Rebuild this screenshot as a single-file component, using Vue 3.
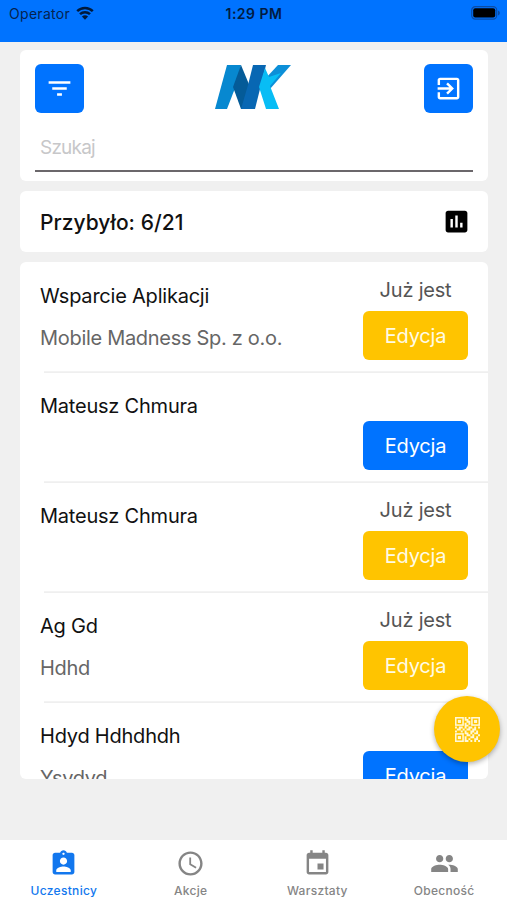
<script setup>
const people = [
  { name: 'Wsparcie Aplikacji', company: 'Mobile Madness Sp. z o.o.', present: true },
  { name: 'Mateusz Chmura', company: '', present: false },
  { name: 'Mateusz Chmura', company: '', present: true },
  { name: 'Ag Gd', company: 'Hdhd', present: true },
  { name: 'Hdyd Hdhdhdh', company: 'Ysydyd', present: false },
]

const tabs = [
  { label: 'Uczestnicy', active: true, path: 'M19 3h-4.18C14.4 1.84 13.3 1 12 1s-2.4.84-2.82 2H5c-1.1 0-2 .9-2 2v14c0 1.1.9 2 2 2h14c1.1 0 2-.9 2-2V5c0-1.1-.9-2-2-2zm-7 0c.55 0 1 .45 1 1s-.45 1-1 1-1-.45-1-1 .45-1 1-1zm0 4c1.66 0 3 1.34 3 3s-1.34 3-3 3-3-1.34-3-3 1.34-3 3-3zm6 12H6v-1.4c0-2 4-3.1 6-3.1s6 1.1 6 3.1V19z' },
  { label: 'Akcje', path: 'M11.99 2C6.47 2 2 6.48 2 12s4.47 10 9.99 10C17.52 22 22 17.52 22 12S17.52 2 11.99 2zM12 20c-4.42 0-8-3.58-8-8s3.58-8 8-8 8 3.58 8 8-3.58 8-8 8zm.5-13H11v6l5.25 3.15.75-1.23-4.5-2.67z' },
  { label: 'Warsztaty', path: 'M17 12h-5v5h5v-5zM16 1v2H8V1H6v2H5c-1.11 0-1.99.9-1.99 2L3 19c0 1.1.89 2 2 2h14c1.1 0 2-.9 2-2V5c0-1.1-.9-2-2-2h-1V1h-2zm3 18H5V8h14v11z' },
  { label: 'Obecność', path: 'M16 11c1.66 0 2.99-1.34 2.99-3S17.66 5 16 5s-3 1.34-3 3 1.34 3 3 3zm-8 0c1.66 0 2.99-1.34 2.99-3S9.66 5 8 5 5 6.34 5 8s1.34 3 3 3zm0 2c-2.33 0-7 1.17-7 3.5V19h14v-2.5c0-2.33-4.67-3.5-7-3.5zm8 0c-.29 0-.62.02-.97.05 1.16.84 1.97 1.97 1.97 3.45V19h6v-2.5c0-2.33-4.67-3.5-7-3.5z' },
]

// Data modules between the three finder squares, on a 13 x 13 grid
const qrRows = [
  '.....1.1.....',
  '.....11......',
  '......11.....',
  '.....1.1.....',
  '.....11......',
  '1.11.1.11.1.1',
  '.11.1.11.11..',
  '1..1.1..11.1.',
  '.....11.1.11.',
  '......11.1..1',
  '.....1..11.1.',
  '.....1.1..11.',
  '.....11.1.1.1',
]
const qrPath = qrRows
  .flatMap((row, y) => [...row].map((v, x) => (v === '1' ? `M${x} ${y}h1v1h-1z` : '')))
  .join('')
const finders = [[0, 0], [8.4, 0], [0, 8.4]]
</script>

<template>
  <div class="screen">
    <header class="status">
      <div class="carrier">
        <span>Operator</span>
        <svg class="wifi" viewBox="0 0 18 14">
          <path d="M1.2 5.2a11.2 11.2 0 0 1 15.6 0M4 8.2a7.2 7.2 0 0 1 10 0" />
          <path class="solid" d="M9 13.8L5.9 10.6a4.5 4.5 0 0 1 6.2 0z" />
        </svg>
      </div>
      <strong class="clock">1:29 PM</strong>
      <div class="power">
        <svg class="battery" viewBox="0 0 30 14">
          <rect class="shell" x=".7" y=".7" width="25" height="12.4" rx="3.6" />
          <rect x="2.2" y="2.2" width="22" height="9.4" rx="2" />
          <path class="tip" d="M27 4.5c2.5.7 2.5 4.3 0 5z" />
        </svg>
      </div>
    </header>

    <main class="content">
      <section class="card search">
        <div class="tools">
          <button class="square" aria-label="Filtr">
            <svg class="icon" viewBox="0 0 24 24"><path d="M10 18h4v-2h-4v2zM3 6v2h18V6H3zm3 7h12v-2H6v2z" /></svg>
          </button>
          <svg class="logo" viewBox="0 0 76 44">
            <path fill="#0788d0" d="M12 0H26L22 18L12 44H0z" />
            <path fill="#045b98" d="M26 0L38 29L34 44H26L18 22z" />
            <path fill="#0867b3" d="M38 0H51L40 44H26L33 20z" />
            <path fill="#0c8fd8" d="M63 0H76L55 24L50 14z" />
            <path fill="#08bdf5" d="M50 3L54 12L66 8L55 21L64 44H51L44 22z" />
          </svg>
          <button class="square" aria-label="Wyjdź">
            <svg class="icon" viewBox="0 0 24 24"><path d="M10.09 15.59L11.5 17l5-5-5-5-1.41 1.41L12.67 11H3v2h9.67l-2.58 2.59zM19 3H5c-1.11 0-2 .9-2 2v4h2V5h14v14H5v-4H3v4c0 1.1.89 2 2 2h14c1.1 0 2-.9 2-2V5c0-1.1-.9-2-2-2z" /></svg>
          </button>
        </div>
        <div class="field">Szukaj</div>
      </section>

      <section class="card summary">
        <span class="count">Przybyło: 6/21</span>
        <svg class="icon" viewBox="0 0 24 24"><path d="M19 3H5c-1.1 0-2 .9-2 2v14c0 1.1.9 2 2 2h14c1.1 0 2-.9 2-2V5c0-1.1-.9-2-2-2zM9 17H7v-7h2v7zm4 0h-2V7h2v10zm4 0h-2v-4h2v4z" /></svg>
      </section>

      <section class="card list">
        <article v-for="(p, i) in people" :key="i" class="row">
          <div class="who">
            <div class="name">{{ p.name }}</div>
            <div class="company">{{ p.company }}</div>
          </div>
          <div class="side">
            <div class="state">{{ p.present ? 'Już jest' : '' }}</div>
            <button class="edit" :class="{ present: p.present }">Edycja</button>
          </div>
        </article>
      </section>
    </main>

    <nav class="tabs">
      <div v-for="t in tabs" :key="t.label" class="tab" :class="{ active: t.active }">
        <svg class="icon" viewBox="0 0 24 24"><path :d="t.path" /></svg>
        <span>{{ t.label }}</span>
      </div>
    </nav>

    <button class="fab" aria-label="Kod QR">
      <svg class="qr" viewBox="0 0 13 13">
        <path :d="qrPath" />
        <g v-for="([x, y], i) in finders" :key="i">
          <rect class="ring" :x="x + 0.4" :y="y + 0.4" width="3.8" height="3.8" />
          <rect :x="x + 1.5" :y="y + 1.5" width="1.6" height="1.6" />
        </g>
      </svg>
    </button>
  </div>
</template>

<style>
body { margin: 0; background: #f0f0f0; }
</style>

<style scoped>
.screen {
  position: relative;
  display: flex;
  flex-direction: column;
  width: 507px;
  height: 900px;
  overflow: hidden;
  box-sizing: border-box;
  background: #f0f0f0;
  color: #111;
  font-family: Inter, "Liberation Sans", sans-serif;
}
button { border: 0; padding: 0; font: inherit; }
svg { display: block; fill: currentColor; }
.icon { width: 29px; height: 29px; }

.status {
  display: grid;
  grid-template-columns: 1fr auto 1fr;
  height: 42px;
  flex: none;
  box-sizing: border-box;
  padding: 4px 8px 0 9px;
  background: #0073ff;
  color: #05234f;
  font-size: 14px;
  line-height: 20px;
}
.carrier { display: flex; gap: 6px; letter-spacing: 0.3px; }
.wifi { width: 18px; height: 14px; margin-top: 2px; color: #001a3c; }
.wifi path { fill: none; stroke: currentColor; stroke-width: 2.5; }
.wifi .solid { fill: currentColor; stroke: none; }
.clock { font-weight: 600; letter-spacing: 0.5px; color: #021b42; }
.power { display: flex; justify-content: flex-end; padding-top: 2px; }
.battery { width: 30px; height: 14px; color: #000; margin-right: -2px; }
.battery .shell { fill: none; stroke: #0b4da6; stroke-width: 1.2; }
.battery .tip { fill: #0b4da6; }

.content {
  display: flex;
  flex-direction: column;
  gap: 10px;
  height: 729px;
  flex: none;
  margin: 8px 19px 0 20px;
}
.card { background: #fff; border-radius: 6px; flex: none; }

.search { height: 131px; box-sizing: border-box; padding: 14px 15px 9px; }
.tools { display: flex; justify-content: space-between; align-items: flex-start; }
.square {
  display: grid;
  place-items: center;
  width: 49px;
  height: 49px;
  border-radius: 6px;
  background: #0073ff;
  color: #fff;
}
.logo { width: 76px; height: 44px; margin: 1px 2px 0 0; }
.field {
  height: 59px;
  box-sizing: border-box;
  padding: 23px 5px 0;
  border-bottom: 2px solid #6b676b;
  color: #c7c7c9;
  font-size: 19px;
  line-height: 24px;
  letter-spacing: -0.8px;
}

.summary {
  display: flex;
  align-items: center;
  justify-content: space-between;
  height: 61px;
  box-sizing: border-box;
  padding: 0 17px 0 20px;
}
.summary .icon { color: #000; }
.count { padding-top: 1px; font-size: 21px; font-weight: 500; letter-spacing: 0.05px; color: #111; }

.list { flex: 1; min-height: 0; overflow: hidden; }
.row {
  display: flex;
  justify-content: space-between;
  height: 110px;
  box-sizing: border-box;
  padding: 14px 20px 0;
  background: linear-gradient(#f3f3f3, #f3f3f3) 24px 100% / 100% 1px no-repeat;
}
.row + .row {
  background:
    linear-gradient(#efefef, #efefef) 24px 0 / 100% 1px no-repeat,
    linear-gradient(#f3f3f3, #f3f3f3) 24px 100% / 100% 1px no-repeat;
}
.who { display: flex; flex-direction: column; gap: 14px; padding-top: 6px; }
.name, .company, .state { font-size: 20px; line-height: 28px; white-space: nowrap; letter-spacing: -0.22px; }
.name { color: #111; }
.company { color: #666; letter-spacing: -0.3px; }
.side { width: 105px; }
.state { height: 35px; color: #555; text-align: center; }
.edit {
  display: block;
  width: 105px;
  height: 49px;
  border-radius: 6px;
  background: #0073ff;
  color: #fff;
  font-size: 20px;
  letter-spacing: -0.2px;
}
.edit.present { background: #ffc400; color: #fffbe6; }

.tabs {
  display: grid;
  grid-template-columns: repeat(4, 1fr);
  height: 60px;
  margin-top: auto;
  background: #fff;
}
.tab {
  display: flex;
  flex-direction: column;
  align-items: center;
  gap: 5px;
  padding: 9px 0 0 1px;
  color: #858585;
  font-size: 12px;
  font-weight: 500;
  line-height: 16px;
  letter-spacing: 0.3px;
}
.tab.active { color: #1277ee; }

.fab {
  position: absolute;
  left: 434px;
  top: 696px;
  display: grid;
  place-items: center;
  width: 66px;
  height: 66px;
  border-radius: 50%;
  background: #ffc400;
  color: #fff8d8;
  box-shadow: 0 2px 5px rgba(0, 0, 0, 0.3);
}
.qr { width: 25px; height: 25px; }
.ring { fill: none; stroke: currentColor; stroke-width: 0.8; }
</style>
